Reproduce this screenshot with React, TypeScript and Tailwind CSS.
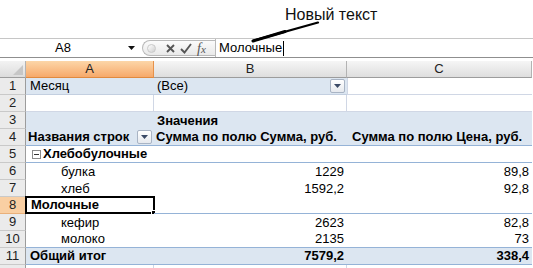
import React from 'react';

const FONT = { fontFamily: '"Liberation Sans", Arial, sans-serif' };

// widths of the sheet columns (row header, A, B, C)
const W = { h: 26, a: 128, b: 193, c: 185 };

type CellProps = {
  w: number;
  className?: string;
  children?: React.ReactNode;
};

const Cell = ({ w, className = '', children }: CellProps) => (
  <div
    style={{ width: w }}
    className={`relative flex h-full shrink-0 items-center overflow-visible whitespace-nowrap ${className}`}
  >
    {children}
  </div>
);

const RowHead = ({ n, active }: { n?: number; active?: boolean }) => (
  <div
    style={{ width: W.h }}
    className={`flex h-full shrink-0 items-center justify-center border-r border-b text-[13px] ${
      active
        ? 'bg-[#f9cfa3] border-r-[#e6a35e] border-b-[#e9b07a] text-[#222]'
        : 'bg-[#ebebeb] border-r-[#9c9c9c] border-b-[#c9c9c9] text-[#222]'
    }`}
  >
    {n}
  </div>
);

const DropBtn = () => (
  <div className="flex h-[14px] w-[15px] items-center justify-center rounded-[2px] border border-[#a9b4c4] bg-gradient-to-b from-[#ffffff] to-[#e6e9ee]">
    <svg width="7" height="4" viewBox="0 0 7 4">
      <path d="M0 0 H7 L3.5 4 Z" fill="#3b4a66" />
    </svg>
  </div>
);

const Row = ({ n, active, children }: { n?: number; active?: boolean; children?: React.ReactNode }) => (
  <div className="flex h-[17px]">
    <RowHead n={n} active={active} />
    {children}
  </div>
);

export default function App() {
  return (
    <div style={FONT} className="relative h-[268px] w-[533px] overflow-hidden bg-white text-black">
      {/* annotation */}
      <div className="flex h-[38px] items-start pl-[285px] pt-[3px] text-[16px] text-[#111]">Новый текст</div>
      <svg className="pointer-events-none absolute left-0 top-0 z-10" width="533" height="60">
        <path d="M318 22.5 L254 40.5" stroke="#000" strokeWidth="2.2" strokeLinecap="round" />
        <path d="M285 31.5 L253 41" stroke="#000" strokeWidth="3" strokeLinecap="round" />
      </svg>

      {/* formula bar */}
      <div className="flex h-[20px] items-stretch border-t border-b border-t-[#c6c6c6] border-b-[#8f8f8f]">
        <div className="flex w-[142px] shrink-0 items-center">
          <div className="w-[124px] pl-[2px] text-center text-[13px]">A8</div>
          <svg width="8" height="5" viewBox="0 0 8 5" className="ml-[4px]">
            <path d="M0 0 H7 L3.5 4 Z" fill="#111" />
          </svg>
        </div>
        <div className="my-[1px] flex w-[73px] shrink-0 items-center rounded-l-full border border-r-0 border-[#b9b9b9] bg-gradient-to-b from-[#fbfbfb] to-[#e9e9e9]">
          <div className="ml-[4px] h-[9px] w-[9px] rounded-full border border-[#c9c9c9] bg-gradient-to-br from-[#ffffff] to-[#cfcfcf]" />
          <svg width="9" height="9" viewBox="0 0 9 9" className="ml-[10px]">
            <path d="M1 1 L8 8 M8 1 L1 8" stroke="#555" strokeWidth="1.9" />
          </svg>
          <svg width="12" height="11" viewBox="0 0 12 11" className="ml-[5px]">
            <path d="M1 6 L4.5 9.5 L11 1" stroke="#555" strokeWidth="1.9" fill="none" />
          </svg>
          <span
            className="ml-[5px] text-[14px] italic text-[#555]"
            style={{ fontFamily: '"Liberation Serif", "Times New Roman", serif' }}
          >
            f<span className="text-[11px]">x</span>
          </span>
        </div>
        <div className="flex flex-1 items-center border-l border-[#b9b9b9] pl-[3px] text-[13px]">
          <span>Молочные</span>
          <span className="ml-[1px] h-[15px] w-[1px] bg-black" />
        </div>
      </div>

      <div className="h-[3px]" />

      {/* column headers */}
      <div className="flex h-[17px] text-[13px] text-[#222]">
        <div
          style={{ width: W.h }}
          className="relative shrink-0 border-r border-b border-r-[#b3b3b3] border-b-[#9c9c9c] bg-gradient-to-b from-[#f3f3f3] to-[#dcdcdc]"
        >
          <svg width="10" height="10" viewBox="0 0 10 10" className="absolute right-[2px] bottom-[2px]">
            <path d="M10 0 V10 H0 Z" fill="#c6c6c6" />
          </svg>
        </div>
        <div
          style={{ width: W.a }}
          className="flex shrink-0 items-center justify-center border-r border-b border-r-[#e6914a] border-b-[#e08a3f] bg-gradient-to-b from-[#fcd6a8] to-[#f6a96a]"
        >
          A
        </div>
        <div
          style={{ width: W.b }}
          className="flex shrink-0 items-center justify-center border-r border-b border-r-[#b3b3b3] border-b-[#9c9c9c] bg-gradient-to-b from-[#f6f6f6] to-[#dedede]"
        >
          B
        </div>
        <div
          style={{ width: W.c }}
          className="flex shrink-0 items-center justify-center border-r border-b border-r-[#b3b3b3] border-b-[#9c9c9c] bg-gradient-to-b from-[#f6f6f6] to-[#dedede]"
        >
          C
        </div>
      </div>

      {/* sheet rows */}
      <div className="text-[13px]">
        <Row n={1}>
          <Cell w={W.a} className="border-b border-[#c3cfe0] bg-[#dce6f1] pl-[4px]">Месяц</Cell>
          <Cell w={W.b} className="border-b border-[#c3cfe0] bg-[#dce6f1] pl-[3px] justify-between pr-[2px]">
            <span>(Все)</span>
            <DropBtn />
          </Cell>
          <Cell w={W.c} className="border-l border-b border-[#d0d7e5]" />
        </Row>
        <Row n={2}>
          <Cell w={W.a} className="border-r border-b border-[#d0d7e5]" />
          <Cell w={W.b} className="border-r border-b border-[#d0d7e5]" />
          <Cell w={W.c} className="border-b border-[#d0d7e5]" />
        </Row>
        <Row n={3}>
          <Cell w={W.a} className="bg-[#dce6f1]" />
          <Cell w={W.b} className="bg-[#dce6f1] pl-[3px] font-bold">Значения</Cell>
          <Cell w={W.c} className="bg-[#dce6f1]" />
        </Row>
        <Row n={4}>
          <Cell w={W.a} className="border-b border-[#95b3d7] bg-[#dce6f1] pl-[2px] pr-[2px] font-bold justify-between">
            <span>Названия строк</span>
            <DropBtn />
          </Cell>
          <Cell w={W.b} className="border-b border-[#95b3d7] bg-[#dce6f1] pl-[2px] font-bold">Сумма по полю Сумма, руб.</Cell>
          <Cell w={W.c} className="border-b border-[#95b3d7] bg-[#dce6f1] pl-[5px] font-bold">Сумма по полю Цена, руб.</Cell>
        </Row>
        <Row n={5}>
          <Cell w={W.a} className="border-b border-[#95b3d7] pl-[6px] font-bold">
            <span className="mr-[2px] flex h-[9px] w-[9px] items-center justify-center border border-[#8a8a8a] bg-white">
              <span className="h-[1px] w-[5px] bg-[#333]" />
            </span>
            Хлебобулочные
          </Cell>
          <Cell w={W.b} className="border-b border-[#95b3d7]" />
          <Cell w={W.c} className="border-b border-[#95b3d7]" />
        </Row>
        <Row n={6}>
          <Cell w={W.a} className="pl-[35px]">булка</Cell>
          <Cell w={W.b} className="justify-end pr-[3px]">1229</Cell>
          <Cell w={W.c} className="justify-end pr-[3px]">89,8</Cell>
        </Row>
        <Row n={7}>
          <Cell w={W.a} className="pl-[35px]">хлеб</Cell>
          <Cell w={W.b} className="justify-end pr-[3px]">1592,2</Cell>
          <Cell w={W.c} className="justify-end pr-[3px]">92,8</Cell>
        </Row>
        <Row n={8} active>
          <Cell w={W.a} className="border-b border-[#95b3d7] pl-[5px] font-bold">
            <div className="pointer-events-none absolute left-[-1px] top-[-1px] h-[18px] w-[130px] border-2 border-black" />
            <div className="pointer-events-none absolute left-[125px] top-[13px] h-[5px] w-[5px] border border-white bg-black" />
            Молочные
          </Cell>
          <Cell w={W.b} className="border-b border-[#95b3d7]" />
          <Cell w={W.c} className="border-b border-[#95b3d7]" />
        </Row>
        <Row n={9}>
          <Cell w={W.a} className="pl-[35px]">кефир</Cell>
          <Cell w={W.b} className="justify-end pr-[3px]">2623</Cell>
          <Cell w={W.c} className="justify-end pr-[3px]">82,8</Cell>
        </Row>
        <Row n={10}>
          <Cell w={W.a} className="border-b border-[#95b3d7] pl-[35px]">молоко</Cell>
          <Cell w={W.b} className="border-b border-[#95b3d7] justify-end pr-[3px]">2135</Cell>
          <Cell w={W.c} className="border-b border-[#95b3d7] justify-end pr-[3px]">73</Cell>
        </Row>
        <Row n={11}>
          <Cell w={W.a} className="border-b border-[#95b3d7] bg-[#dce6f1] pl-[4px] font-bold">Общий итог</Cell>
          <Cell w={W.b} className="border-b border-[#95b3d7] bg-[#dce6f1] justify-end pr-[3px] font-bold">7579,2</Cell>
          <Cell w={W.c} className="border-b border-[#95b3d7] bg-[#dce6f1] justify-end pr-[3px] font-bold">338,4</Cell>
        </Row>
        {/* row 12 only peeks in at the bottom edge */}
        <Row>
          <Cell w={W.a} className="border-r border-[#d0d7e5]" />
          <Cell w={W.b} className="border-r border-[#d0d7e5]" />
          <Cell w={W.c} />
        </Row>
      </div>
    </div>
  );
}
